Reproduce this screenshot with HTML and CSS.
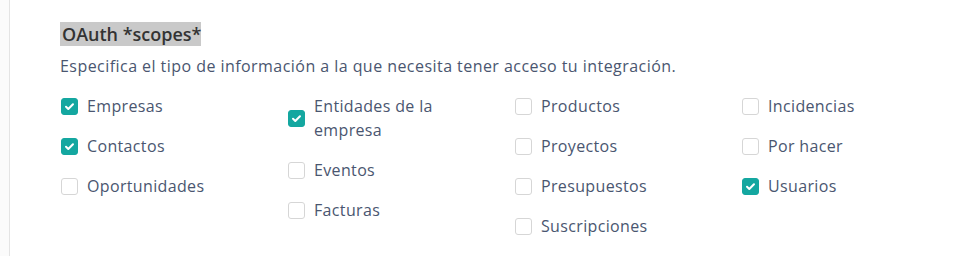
FILE: index.html
```html
<!DOCTYPE html>
<html lang="es">
<head>
<meta charset="utf-8">
<link rel="stylesheet" href="styles.css">
</head>
<body>
<div class="page">
  <div class="rail"></div>
  <main class="content">
    <h2 class="title"><span class="hl">OAuth *scopes*</span></h2>
    <p class="desc">Especifica el tipo de información a la que necesita tener acceso tu integración.</p>
    <div class="grid">
      <div class="col">
        <label class="item"><span class="box on"><svg viewBox="0 0 16 16"><path d="M4.3 8.3l2.4 2.3 5-5" /></svg></span><span class="lbl">Empresas</span></label>
        <label class="item"><span class="box on"><svg viewBox="0 0 16 16"><path d="M4.3 8.3l2.4 2.3 5-5" /></svg></span><span class="lbl">Contactos</span></label>
        <label class="item"><span class="box"></span><span class="lbl">Oportunidades</span></label>
      </div>
      <div class="col">
        <label class="item"><span class="box on"><svg viewBox="0 0 16 16"><path d="M4.3 8.3l2.4 2.3 5-5" /></svg></span><span class="lbl">Entidades de la empresa</span></label>
        <label class="item"><span class="box"></span><span class="lbl">Eventos</span></label>
        <label class="item"><span class="box"></span><span class="lbl">Facturas</span></label>
      </div>
      <div class="col">
        <label class="item"><span class="box"></span><span class="lbl">Productos</span></label>
        <label class="item"><span class="box"></span><span class="lbl">Proyectos</span></label>
        <label class="item"><span class="box"></span><span class="lbl">Presupuestos</span></label>
        <label class="item"><span class="box"></span><span class="lbl">Suscripciones</span></label>
      </div>
      <div class="col">
        <label class="item"><span class="box"></span><span class="lbl">Incidencias</span></label>
        <label class="item"><span class="box"></span><span class="lbl">Por hacer</span></label>
        <label class="item"><span class="box on"><svg viewBox="0 0 16 16"><path d="M4.3 8.3l2.4 2.3 5-5" /></svg></span><span class="lbl">Usuarios</span></label>
      </div>
    </div>
  </main>
</div>
</body>
</html>
```
FILE: styles.css
```css
* { box-sizing: border-box; }
html, body { margin: 0; padding: 0; background: #fff; }
body { font-family: "Open Sans", "Liberation Sans", sans-serif; color: #4a5568; }
.page { display: flex; min-height: 256px; }
.rail { width: 10px; flex: none; background: #fbfbfb; border-right: 1px solid #e4e4e4; }
.content { padding: 23px 0 0 50px; }
.title { margin: 0; font-size: 18px; font-weight: 600; line-height: 22px; color: #333; }
.hl { background: #c9c9c9; padding: 0 0 0 2px; }
.desc { margin: 9px 0 0; font-size: 16px; letter-spacing: 0.45px; line-height: 24px; color: #4a5670; }
.grid { display: grid; grid-template-columns: repeat(4, 203px); column-gap: 24px; margin-top: 16px; }
.col { display: flex; flex-direction: column; gap: 16px; }
.item { display: flex; align-items: center; gap: 9px; font-size: 16px; letter-spacing: 0.35px; line-height: 24px; color: #4a5670; }
.box { flex: none; width: 17px; height: 17px; margin-left: 1px; border: 1px solid #d6d6d6; border-radius: 3px; background: #fff; display: flex; align-items: center; justify-content: center; }
.box.on { background: #14a7a0; border-color: #14a7a0; }
.box svg { width: 15px; height: 15px; fill: none; stroke: #fff; stroke-width: 2.2; stroke-linecap: round; stroke-linejoin: round; }
.lbl { max-width: 170px; }
```
